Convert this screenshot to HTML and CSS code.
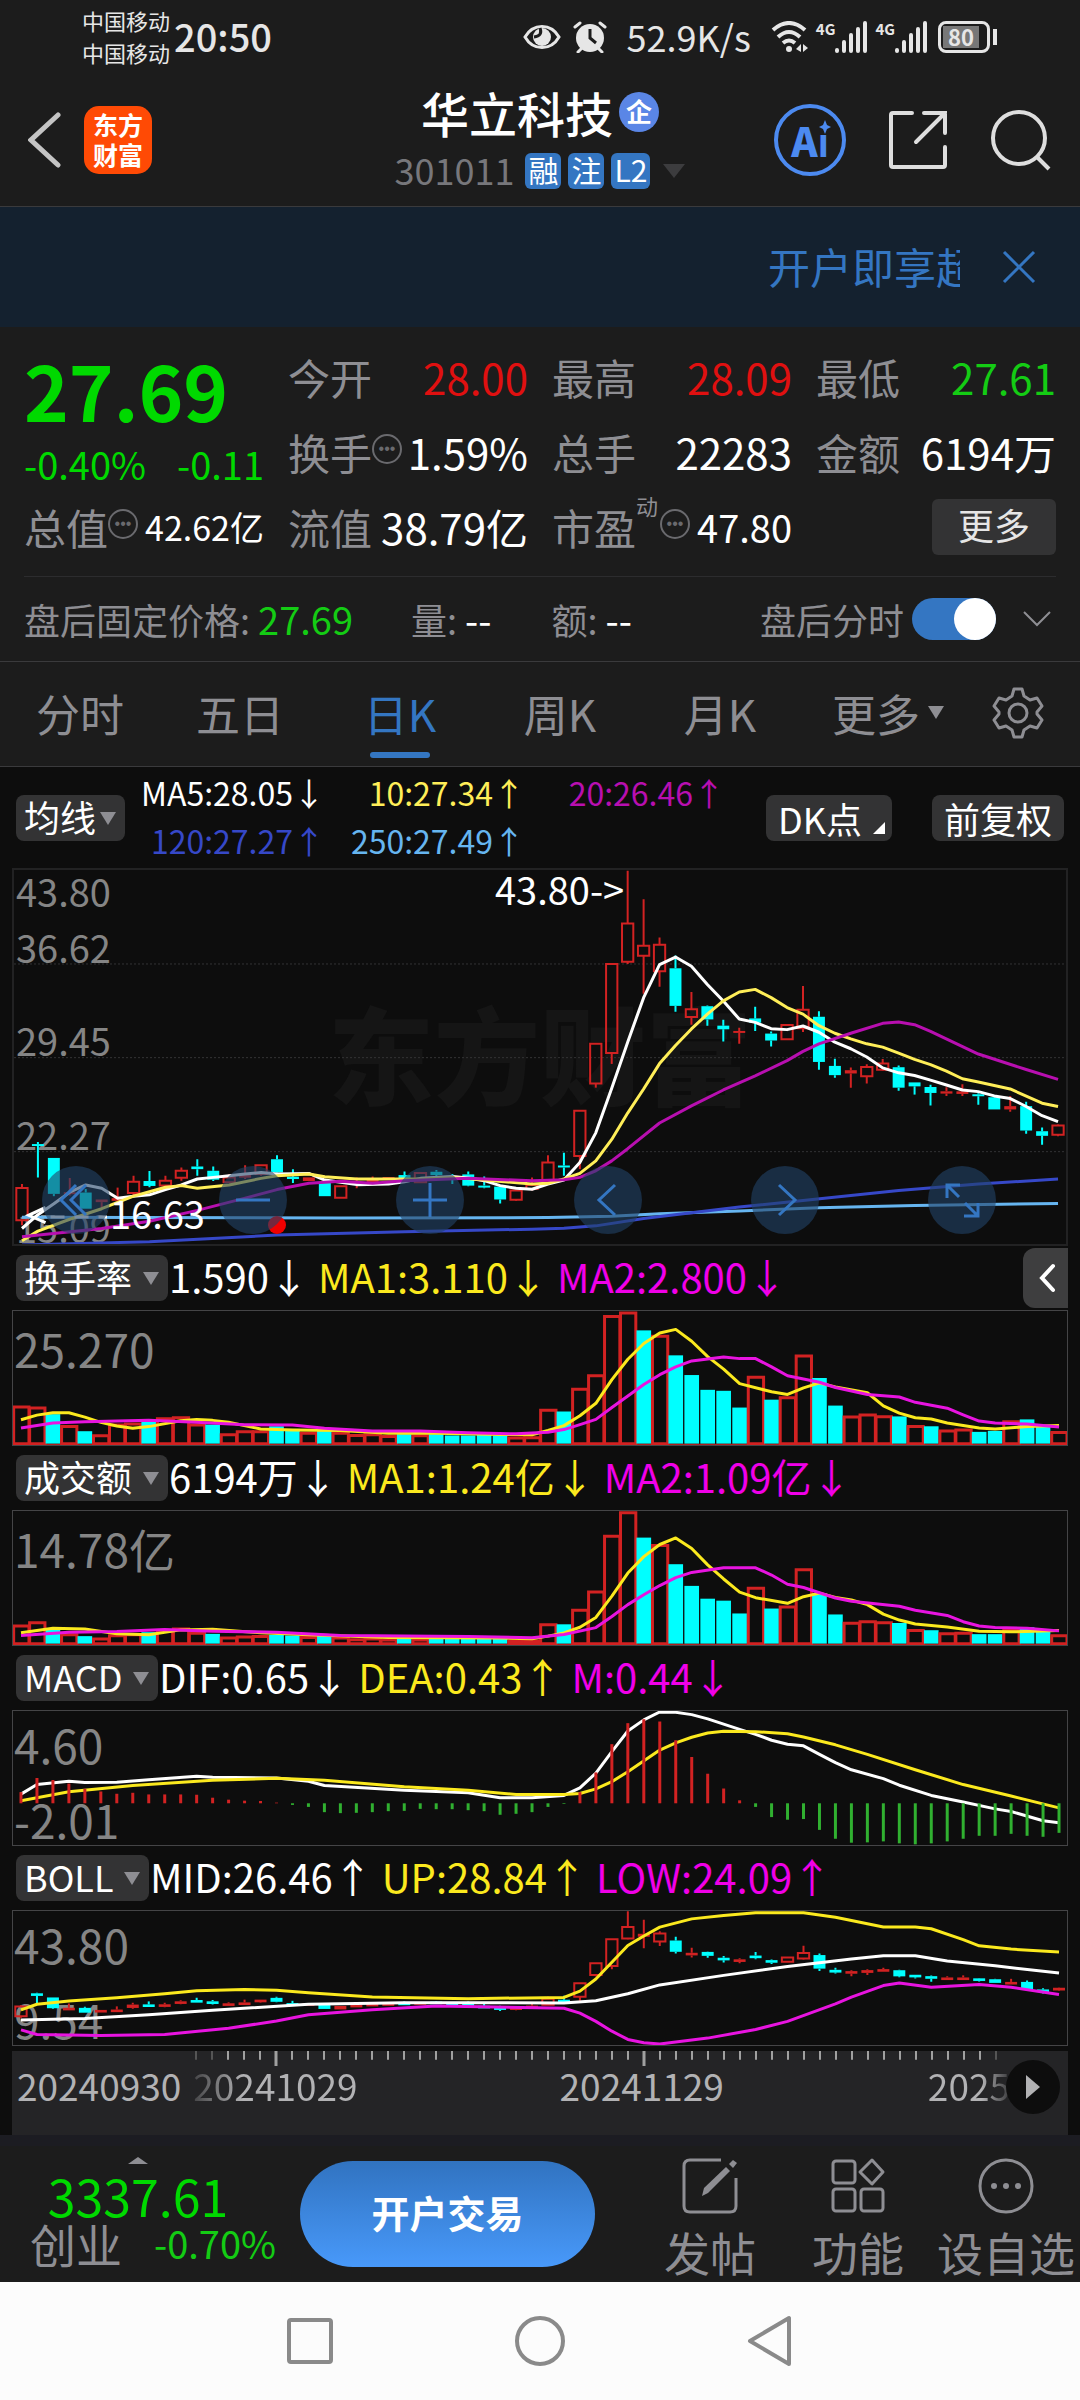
FILE: index.html
```html
<!DOCTYPE html>
<html lang="zh-CN">
<head>
    <meta charset="UTF-8">
    <meta name="viewport" content="width=device-width, initial-scale=1.0">
    <title>华立科技 301011</title>
    <link rel="stylesheet" href="styles.css">
</head>
<body>
    <div class="status-bar">
        <div class="carriers">
            <span>中国移动</span>
            <span>中国移动</span>
        </div>
        <span class="clock">20:50</span>
        <div class="status-icons">
            <svg class="eye" width="38" height="26" viewBox="0 0 38 26"><path d="M2 13C10-1 28-1 36 13C28 27 10 27 2 13Z" fill="none" stroke="#e6e6e6" stroke-width="3"/><circle cx="19" cy="13" r="9" fill="#e6e6e6"/><path d="M17 4Q20 12 11 13" fill="none" stroke="#1c1c1c" stroke-width="3"/></svg>
            <svg class="alarm" width="34" height="32" viewBox="0 0 34 32"><circle cx="17" cy="17" r="14" fill="#e6e6e6"/><path d="M2 6L7 2M32 6L27 2M8 28L5 31M26 28L29 31" stroke="#e6e6e6" stroke-width="3" stroke-linecap="round"/><path d="M17 8V17L23 22" fill="none" stroke="#1c1c1c" stroke-width="3"/></svg>
            <span class="speed">52.9K/s</span>
            <svg class="wifi" width="38" height="32" viewBox="0 0 38 32"><path d="M2 9Q18-5 34 9M7 16Q18 6 29 16M12 22Q18 17 24 22" fill="none" stroke="#e6e6e6" stroke-width="4"/><circle cx="18" cy="28" r="3" fill="#e6e6e6"/><path d="M30 23V31L25 28ZM32 31V23L37 27Z" fill="#e6e6e6"/></svg>
            <div class="signal"><small>4G</small><svg width="33" height="32" viewBox="0 0 33 32"><path d="M2 29V30M9 21V30M16 14V30M23 8V30M30 2V30" stroke="#e6e6e6" stroke-width="4" stroke-linecap="round"/></svg></div>
            <div class="signal"><small>4G</small><svg width="33" height="32" viewBox="0 0 33 32"><path d="M2 29V30M9 21V30M16 14V30M23 8V30M30 2V30" stroke="#e6e6e6" stroke-width="4" stroke-linecap="round"/></svg></div>
            <div class="battery"><span>80</span></div>
        </div>
    </div>

    <header class="top-bar">
        <div class="top-left">
            <button class="icon-btn" aria-label="返回"><svg width="34" height="56" viewBox="0 0 34 56"><path d="M30 3L3 28L30 53" fill="none" stroke="#c4c4c4" stroke-width="5" stroke-linecap="round"/></svg></button>
            <a href="#" class="logo">东方<br>财富</a>
        </div>
        <div class="stock">
            <h1>华立科技<span class="corp">企</span></h1>
            <p class="code"><span>301011</span><span class="tag">融</span><span class="tag">注</span><span class="tag">L2</span><i class="tri-down dark"></i></p>
        </div>
        <div class="top-right">
            <button class="ai" aria-label="AI">Aı<svg width="12" height="14" viewBox="0 0 12 14"><path d="M6 0L8 5L12 7L8 9L6 14L4 9L0 7L4 5Z" fill="#4c8af0"/></svg></button>
            <button class="icon-btn" aria-label="分享"><svg width="60" height="60" viewBox="0 0 60 60"><path d="M24 3H5Q3 3 3 5V55Q3 57 5 57H55Q57 57 57 55V37" fill="none" stroke="#dedede" stroke-width="4" stroke-linecap="round"/><path d="M36 3H57V23M57 3L28 32" fill="none" stroke="#dedede" stroke-width="4" stroke-linecap="round"/></svg></button>
            <button class="icon-btn" aria-label="搜索"><svg width="62" height="62" viewBox="0 0 62 62"><circle cx="29" cy="29" r="26" fill="none" stroke="#dedede" stroke-width="4"/><path d="M47 48L59 60" stroke="#dedede" stroke-width="4"/></svg></button>
        </div>
    </header>

    <div class="banner">
        <a href="#" class="marquee">开户即享超</a>
        <button class="icon-btn" aria-label="关闭"><svg width="34" height="34" viewBox="0 0 34 34"><path d="M2 2L32 32M32 2L2 32" stroke="#3476c2" stroke-width="3"/></svg></button>
    </div>

    <section class="quote">
        <div class="quote-grid">
            <div class="price">
                <strong>27.69</strong>
                <p><span>-0.40%</span><span>-0.11</span></p>
            </div>
            <div class="cell"><span>今开</span><b class="up">28.00</b></div>
            <div class="cell"><span>最高</span><b class="up">28.09</b></div>
            <div class="cell"><span>最低</span><b class="down">27.61</b></div>
            <div class="cell"><span>换手</span><i class="dots">•••</i><b>1.59%</b></div>
            <div class="cell"><span>总手</span><b>22283</b></div>
            <div class="cell"><span>金额</span><b>6194万</b></div>
            <div class="cell"><span>总值</span><i class="dots">•••</i><b class="small">42.62亿</b></div>
            <div class="cell"><span>流值</span><b>38.79亿</b></div>
            <div class="cell"><span>市盈<sup>动</sup></span><i class="dots pe">•••</i><b class="medium">47.80</b></div>
            <div class="cell end"><button class="more">更多</button></div>
        </div>
        <div class="after-hours">
            <span>盘后固定价格: <b class="down">27.69</b></span>
            <span class="vol">量: <b>--</b></span>
            <span class="amt">额: <b>--</b></span>
            <label class="switch-label" for="after">盘后分时</label>
            <input type="checkbox" class="switch" id="after" checked>
            <svg width="30" height="18" viewBox="0 0 30 18"><path d="M2 2L15 15L28 2" fill="none" stroke="#8e8e93" stroke-width="2"/></svg>
        </div>
    </section>

    <nav class="tabs">
        <button>分时</button>
        <button>五日</button>
        <button class="active">日K</button>
        <button>周K</button>
        <button>月K</button>
        <button>更多<i class="tri-down"></i></button>
        <button aria-label="设置"><svg width="52" height="52" viewBox="0 0 52 52"><path d="M22 2H30L32 9L38 13L45 11L50 19L45 25V27L50 33L45 41L38 39L32 43L30 50H22L20 43L14 39L7 41L2 33L7 27V25L2 19L7 11L14 13L20 9Z" fill="none" stroke="#8e8e93" stroke-width="3" stroke-linejoin="round"/><circle cx="26" cy="26" r="9" fill="none" stroke="#8e8e93" stroke-width="3"/></svg></button>
    </nav>

    <main class="charts">
        <div class="ma-row">
            <label class="pick tight"><select aria-label="均线"><option>均线</option></select></label>
            <div class="ma-values">
                <span class="white">MA5:28.05↓</span>
                <span class="ma10">10:27.34↑</span>
                <span class="ma20">20:26.46↑</span>
                <span class="ma120">120:27.27↑</span>
                <span class="ma250">250:27.49↑</span>
            </div>
            <button class="chip dk">DK点</button>
            <button class="chip">前复权</button>
        </div>

        <div class="frame main-frame">
            <span class="watermark">东方财富</span>
            <div class="price-scale">
                <span class="top">43.80</span><span>36.62</span><span>29.45</span><span>22.27</span><span>15.09</span>
            </div>
            <svg id="kline" viewBox="0 53 3168 1134" preserveAspectRatio="none"></svg>
            <span class="mark high">43.80-&gt;</span>
            <span class="mark low">16.63</span>
            <span class="event"></span>
            <div class="tools">
                <button aria-label="最早"><svg viewBox="0 0 68 68"><path d="M34 19L19 34L34 49M44 19L29 34L44 49"/></svg></button>
                <button aria-label="缩小"><svg viewBox="0 0 68 68"><path d="M17 34H51"/></svg></button>
                <button aria-label="放大"><svg viewBox="0 0 68 68"><path d="M17 34H51M34 17V51"/></svg></button>
                <button aria-label="左移"><svg viewBox="0 0 68 68"><path d="M41 19L25 34L41 49"/></svg></button>
                <button aria-label="右移"><svg viewBox="0 0 68 68"><path d="M28 19L44 34L28 49"/></svg></button>
                <button aria-label="全屏"><svg viewBox="0 0 68 68"><path d="M19 32V19H32M19 19L31 31M50 37V50H36M50 50L37 37"/></svg></button>
            </div>
        </div>

        <div class="indicator-head">
            <label class="pick"><select aria-label="指标一"><option>换手率</option></select></label>
            <span class="white">1.590↓</span><span class="yellow">MA1:3.110↓</span><span class="magenta">MA2:2.800↓</span>
            <button class="collapse" aria-label="展开"><svg width="18" height="30" viewBox="0 0 18 30"><path d="M15 3L4 15L15 27" fill="none" stroke="#fff" stroke-width="4" stroke-linecap="round"/></svg></button>
        </div>
        <div class="frame">
            <div class="scale"><span>25.270</span></div>
            <svg id="turnover" viewBox="0 181 3168 408" preserveAspectRatio="none"></svg>
        </div>

        <div class="indicator-head">
            <label class="pick"><select aria-label="指标二"><option>成交额</option></select></label>
            <span class="white">6194万↓</span><span class="yellow">MA1:1.24亿↓</span><span class="magenta">MA2:1.09亿↓</span>
        </div>
        <div class="frame">
            <div class="scale"><span>14.78亿</span></div>
            <svg id="amount" viewBox="0 781 3168 408" preserveAspectRatio="none"></svg>
        </div>

        <div class="indicator-head">
            <label class="pick"><select aria-label="指标三"><option>MACD</option></select></label>
            <span class="white">DIF:0.65↓</span><span class="yellow">DEA:0.43↑</span><span class="magenta">M:0.44↓</span>
        </div>
        <div class="frame">
            <div class="scale"><span>4.60</span><span>-2.01</span></div>
            <svg id="macd" viewBox="0 151 3168 408" preserveAspectRatio="none"></svg>
        </div>

        <div class="indicator-head">
            <label class="pick"><select aria-label="指标四"><option>BOLL</option></select></label>
            <span class="white">MID:26.46↑</span><span class="yellow">UP:28.84↑</span><span class="magenta">LOW:24.09↑</span>
        </div>
        <div class="frame">
            <div class="scale"><span>43.80</span><span>9.54</span></div>
            <svg id="boll" viewBox="0 751 3168 408" preserveAspectRatio="none"></svg>
        </div>

        <div class="timeline">
            <svg id="ticks" viewBox="0 0 3168 48" preserveAspectRatio="none"></svg>
            <div class="dates">
                <span>20240930</span>
                <span class="fade-in">20241029</span>
                <span class="mid">20241129</span>
                <span class="fade-out">2025</span>
            </div>
            <button class="play" aria-label="播放"></button>
        </div>
    </main>

    <footer class="bottom-bar">
        <div class="index">
            <i class="tri-up"></i>
            <strong>3337.61</strong>
            <p><span>创业</span><b>-0.70%</b></p>
        </div>
        <button class="trade">开户交易</button>
        <div class="actions">
            <a href="#"><svg width="58" height="58" viewBox="0 0 58 58"><path d="M40 3H9Q3 3 3 9V49Q3 55 9 55H49Q55 55 55 49V21" fill="none" stroke="#8e8e93" stroke-width="3"/><path d="M21 39L23 31L45 10L49 14L27 36Z" fill="#8e8e93"/><path d="M48 7L52 3L56 6L52 11Z" fill="#8e8e93"/></svg>发帖</a>
            <a href="#"><svg width="58" height="58" viewBox="0 0 58 58"><g fill="none" stroke="#8e8e93" stroke-width="3"><rect x="4" y="4" width="22" height="22" rx="3"/><rect x="4" y="32" width="22" height="22" rx="3"/><rect x="32" y="32" width="22" height="22" rx="3"/><path d="M43 3L54 15L43 27L31 15Z" stroke-linejoin="round"/></g></svg>功能</a>
            <a href="#"><svg width="58" height="58" viewBox="0 0 58 58"><circle cx="29" cy="29" r="26" fill="none" stroke="#8e8e93" stroke-width="3"/><g fill="#8e8e93"><circle cx="17" cy="29" r="3"/><circle cx="29" cy="29" r="3"/><circle cx="41" cy="29" r="3"/></g></svg>设自选</a>
        </div>
    </footer>

    <div class="system-nav">
        <button aria-label="多任务"><svg width="48" height="52" viewBox="0 0 48 52"><rect x="3" y="5" width="42" height="42" rx="2"/></svg></button>
        <button aria-label="主页"><svg width="52" height="52" viewBox="0 0 52 52"><circle cx="26" cy="26" r="23"/></svg></button>
        <button aria-label="后退"><svg width="48" height="52" viewBox="0 0 48 52"><path d="M43 3V49L4 26Z" stroke-linejoin="round"/></svg></button>
    </div>

    <script src="charts.js"></script>
</body>
</html>
```

FILE: styles.css
```css
* {
    box-sizing: border-box;
}

body {
    margin: 0;
    background: #1c1c1c;
    color: #fff;
    font-family: "Noto Sans CJK SC", sans-serif;
    font-size: 36px;
    line-height: 1;
}

button, select {
    font: inherit;
    color: inherit;
    background: none;
    border: none;
    padding: 0;
    cursor: pointer;
}

h1, p {
    margin: 0;
}

b, i, small {
    font-weight: normal;
    font-style: normal;
}

a {
    color: inherit;
    text-decoration: none;
}

svg {
    display: block;
    flex: none;
}

.up { color: #e01010; }
.down { color: #14cc14; }
.white { color: #fff; }
.yellow { color: #fbe91e; }
.magenta { color: #f000e8; }

.tri-down, .tri-up {
    display: inline-block;
    border: 8px solid transparent;
    border-top: 13px solid #8e8e93;
    border-bottom: 0;
}

.tri-down.dark {
    border-width: 14px 11px 0;
    border-top-color: #3c3c3e;
    margin-left: 6px;
}

.tri-up {
    border-width: 0 10px 7px;
    border-bottom: 7px solid #8e8e93;
}

/* phone status bar */
.status-bar {
    display: flex;
    align-items: center;
    height: 74px;
    padding: 0 82px;
    color: #e6e6e6;
}

.carriers {
    display: grid;
    gap: 10px;
    padding-bottom: 2px;
    font-size: 22px;
}

.clock {
    margin-left: 4px;
    padding-bottom: 2px;
    font-size: 38px;
    font-weight: 500;
}

.status-icons {
    display: flex;
    align-items: center;
    margin-left: auto;
}

.alarm { margin-left: 12px; }
.speed { margin: 0 20px; padding-bottom: 3px; }

.signal {
    display: flex;
    align-items: flex-start;
    margin-left: 7px;
}

.signal small {
    font-size: 15px;
    font-weight: 700;
}

.battery {
    position: relative;
    width: 52px;
    height: 32px;
    margin-left: 10px;
    margin-right: 8px;
    border: 3px solid #e6e6e6;
    border-radius: 8px;
    padding: 2px;
}

.battery span {
    display: block;
    width: 36px;
    height: 22px;
    line-height: 20px;
    background: #777;
    font-size: 22px;
    font-weight: 700;
    text-align: center;
}

.battery::after {
    content: "";
    position: absolute;
    right: -10px;
    top: 5px;
    width: 4px;
    height: 16px;
    background: #e6e6e6;
}

/* title bar */
.top-bar {
    display: grid;
    grid-template-columns: 1fr auto 1fr;
    align-items: center;
    height: 133px;
    padding: 0 28px;
    border-bottom: 1px solid #3a3a3c;
}

.top-left {
    display: flex;
    align-items: center;
    gap: 22px;
}

.logo {
    padding: 3px 9px 5px;
    border-radius: 15px;
    background: #ff4a05;
    font-size: 25px;
    font-weight: 700;
    line-height: 30px;
}

.stock h1 {
    display: flex;
    align-items: center;
    justify-content: center;
    gap: 6px;
    font-size: 48px;
    font-weight: 500;
    line-height: 44px;
}

.corp {
    width: 40px;
    height: 40px;
    line-height: 37px;
    border-radius: 50%;
    background: #5a86e6;
    font-size: 26px;
    font-weight: 700;
    text-align: center;
}

.code {
    display: flex;
    align-items: center;
    justify-content: center;
    gap: 7px;
    margin-top: 17px;
    color: #77777b;
}

.code span:first-child {
    padding-bottom: 3px;
    margin-right: 4px;
}

.tag {
    height: 36px;
    padding: 0 3px;
    border-radius: 6px;
    background: #3476c2;
    color: #fff;
    font-size: 30px;
    line-height: 33px;
}

.top-right {
    display: flex;
    align-items: center;
    justify-content: flex-end;
    gap: 42px;
}

.ai {
    position: relative;
    width: 72px;
    height: 72px;
    border: 4px solid #4c8af0;
    border-radius: 50%;
    color: #4c8af0;
    font-size: 40px;
    font-weight: 900;
    line-height: 58px;
}

.ai svg {
    position: absolute;
    right: 11px;
    top: 12px;
}

/* promo */
.banner {
    display: flex;
    align-items: center;
    justify-content: flex-end;
    gap: 42px;
    height: 120px;
    padding-right: 44px;
    background: #14212f;
    color: #3476c2;
}

.marquee {
    width: 192px;
    overflow: hidden;
    padding-bottom: 2px;
    font-size: 42px;
    line-height: 50px;
    white-space: nowrap;
}

/* quote */
.quote {
    padding: 12px 24px 0;
}

.quote-grid {
    display: grid;
    grid-template-columns: repeat(4, 1fr);
    grid-auto-rows: 75px;
    column-gap: 24px;
    padding-bottom: 12px;
    border-bottom: 1px solid #2c2c2e;
    box-sizing: content-box;
}

.price {
    grid-row: span 2;
    color: #00d900;
}

.price strong {
    display: block;
    font-size: 76px;
    line-height: 100px;
}

.price p {
    display: flex;
    justify-content: space-between;
    font-size: 38px;
    line-height: 50px;
}

.cell {
    display: flex;
    align-items: center;
    font-size: 42px;
    white-space: nowrap;
    color: #8e8e93;
}

.cell b {
    margin-left: auto;
    color: #fff;
}

.cell b.up { color: #e01010; }
.cell b.down { color: #14cc14; }
.cell b.small { font-size: 34px; }
.cell b.medium { font-size: 38px; }

.cell.end {
    justify-content: flex-end;
}

.cell > span {
    position: relative;
}

.cell sup {
    position: absolute;
    left: 84px;
    top: -12px;
    font-size: 22px;
}

.dots {
    width: 30px;
    height: 30px;
    margin-bottom: 6px;
    border: 2px solid #6a6a6e;
    border-radius: 50%;
    color: #6a6a6e;
    font-family: "Liberation Sans", sans-serif;
    font-size: 16px;
    line-height: 26px;
    text-align: center;
}

.dots.pe {
    margin-left: 24px;
}

.more {
    width: 124px;
    height: 56px;
    padding-bottom: 6px;
    border-radius: 6px;
    background: #333334;
    color: #e6e6e6;
    font-size: 36px;
}

.after-hours {
    display: flex;
    align-items: center;
    height: 84px;
    padding-right: 4px;
    color: #8e8e93;
}

.after-hours b { font-size: 38px; }
.vol { margin-left: 58px; }
.amt { margin-left: 60px; }
.vol b, .amt b { color: #fff; }
.switch-label { margin-left: auto; }

.switch {
    appearance: none;
    position: relative;
    width: 84px;
    height: 42px;
    margin: 0 26px 0 8px;
    border-radius: 21px;
    background: #3476c2;
}

.switch::after {
    content: "";
    position: absolute;
    right: 0;
    width: 42px;
    height: 42px;
    border-radius: 50%;
    background: #fff;
}

/* period tabs */
.tabs {
    display: grid;
    grid-template-columns: repeat(5, 160fr) 176fr 84fr;
    height: 106px;
    padding-right: 20px;
    border-top: 1px solid #3a3a3c;
    border-bottom: 1px solid #3a3a3c;
    color: #8e8e93;
    font-size: 44px;
}

.tabs button {
    display: flex;
    align-items: center;
    justify-content: center;
    gap: 8px;
    position: relative;
    padding-bottom: 3px;
}

.tabs .active {
    color: #3476c2;
}

.tabs .active::after {
    content: "";
    position: absolute;
    bottom: 8px;
    width: 60px;
    height: 6px;
    border-radius: 3px;
    background: #3476c2;
}

/* charts */
.charts {
    padding: 0 12px;
    background: #0d0d0d;
}

.ma-row {
    display: flex;
    align-items: center;
    height: 101px;
    padding: 0 4px;
}

.ma-values {
    flex: 1;
    display: grid;
    grid-template-columns: repeat(3, 200px);
    row-gap: 16px;
    padding-bottom: 4px;
    font-size: 32px;
    text-align: right;
}

.ma10 { color: #ffee58; }
.ma20 { color: #b80fb0; }
.ma120 { color: #3648c8; }
.ma250 { color: #66b5f0; }

.pick {
    position: relative;
    border-radius: 8px;
    background: #333334;
}

.pick select {
    appearance: none;
    display: block;
    height: 46px;
    padding: 0 35px 4px 8px;
    line-height: 42px;
}

.pick.tight select {
    padding-right: 28px;
}

.pick::after {
    content: "";
    position: absolute;
    right: 9px;
    top: 17px;
    border: 8px solid transparent;
    border-top: 13px solid #8e8e93;
    border-bottom: 0;
    pointer-events: none;
}

.chip {
    position: relative;
    height: 46px;
    padding: 0 12px;
    margin-left: 40px;
    border-radius: 8px;
    background: #333334;
    line-height: 40px;
}

.chip.dk {
    padding-right: 30px;
}

.chip.dk::after {
    content: "";
    position: absolute;
    right: 7px;
    bottom: 7px;
    border-left: 12px solid transparent;
    border-bottom: 12px solid #fff;
}

.frame {
    position: relative;
    height: 136px;
    border: 1px solid #444446;
}

.frame > svg {
    position: relative;
    width: 100%;
    height: 100%;
}

.frame path, .frame rect, .timeline path {
    vector-effect: non-scaling-stroke;
}

.main-frame {
    height: 378px;
    border: 2px solid #222223;
}

.scale {
    position: absolute;
    left: 1px;
    top: 0;
    bottom: 0;
    padding: 10px 0 3px;
    display: flex;
    flex-direction: column;
    justify-content: space-between;
    font-size: 46px;
    color: #858585;
}

.scale span:only-child {
    line-height: 54px;
}

/* every label sits on its own grid line */
.price-scale {
    position: absolute;
    left: 2px;
    top: 0;
    bottom: 0;
    display: grid;
    grid-template-columns: 100px;
    grid-template-rows: repeat(4, 1fr);
    align-items: end;
    color: #858585;
    font-size: 38px;
    line-height: 34px;
}

.price-scale span {
    grid-column: 1;
}

.price-scale .top {
    grid-row: 1;
    align-self: start;
    padding-top: 4px;
}

.price-scale .top + span {
    grid-row: 1;
}

.watermark {
    position: absolute;
    left: 0;
    right: 0;
    top: 128px;
    color: #151515;
    font-size: 106px;
    font-weight: 900;
    text-align: center;
}

.mark {
    position: absolute;
    font-size: 38px;
}

.mark.high {
    right: 42%;
    top: 0;
}

.mark.low {
    left: 96px;
    bottom: 12px;
}

.event {
    position: absolute;
    left: 25%;
    bottom: 10px;
    width: 18px;
    height: 18px;
    margin-left: -9px;
    border-radius: 50%;
    background: #f00000;
}

.tools {
    position: absolute;
    left: 28px;
    right: 70px;
    bottom: 10px;
    display: flex;
    justify-content: space-between;
}

.tools button {
    width: 68px;
    height: 68px;
    border-radius: 50%;
    background: rgba(34, 66, 104, 0.6);
}

.tools path {
    fill: none;
    stroke: #3476c2;
    stroke-width: 3;
}

.indicator-head {
    position: relative;
    display: flex;
    align-items: center;
    height: 64px;
    padding-left: 4px;
    font-size: 40px;
    white-space: nowrap;
}

.indicator-head span {
    margin-right: 9px;
    padding-bottom: 4px;
}

.indicator-head .pick {
    margin-right: 1px;
    font-size: 36px;
}

.collapse {
    position: absolute;
    right: 0;
    top: 2px;
    width: 45px;
    height: 60px;
    padding-left: 15px;
    border-radius: 12px 0 0 12px;
    background: #3e3e3f;
}

/* date slider */
.timeline {
    position: relative;
    height: 89px;
    border-top: 5px solid #0d0d0d;
    background: #242426;
}

.timeline > svg {
    width: 100%;
    height: 16px;
}

.dates {
    display: flex;
    padding-left: 5px;
    color: #b2b2b4;
    font-size: 37px;
    line-height: 36px;
}

.fade-in, .fade-out {
    margin-left: 12px;
    background: linear-gradient(90deg, #444446, #b2b2b4 30%);
    background-clip: text;
    color: transparent;
}

.dates .mid {
    margin-left: 202px;
}

.fade-out {
    margin-left: auto;
    margin-right: 58px;
    background-image: linear-gradient(90deg, #b2b2b4 65%, #3a3a3c);
}

.play {
    position: absolute;
    right: 8px;
    top: 9px;
    width: 54px;
    height: 54px;
    border-radius: 50%;
    background: #0d0d0d;
}

.play::after {
    content: "";
    display: block;
    margin-left: 20px;
    width: 0;
    border: 12px solid transparent;
    border-left: 14px solid #b2b2b4;
    border-right: 0;
}

/* bottom bar */
.bottom-bar {
    display: flex;
    height: 147px;
    padding-top: 11px;
    border-top: 11px solid #1c1c22;
    color: #8e8e93;
}

.index {
    width: 276px;
    margin-right: 24px;
    display: flex;
    flex-direction: column;
    align-items: center;
}

.index strong {
    margin-top: 6px;
    font-size: 50px;
    font-weight: normal;
    color: #00d900;
}

.index p {
    align-self: stretch;
    display: flex;
    align-items: center;
    justify-content: space-between;
    padding-left: 30px;
    font-size: 46px;
}

.index b {
    font-size: 38px;
    color: #14cc14;
}

.trade {
    width: 295px;
    height: 106px;
    margin-top: 4px;
    padding-bottom: 4px;
    border-radius: 53px;
    background: linear-gradient(#3173c0, #4899fa);
    color: #fff;
    font-size: 38px;
    font-weight: 700;
}

.actions {
    flex: 1;
    display: grid;
    grid-template-columns: repeat(3, 148px);
    justify-content: end;
    font-size: 46px;
    white-space: nowrap;
}

.actions a {
    display: flex;
    flex-direction: column;
    align-items: center;
    justify-content: space-between;
    padding-bottom: 8px;
}

.system-nav {
    display: flex;
    justify-content: center;
    gap: 180px;
    padding: 33px 0;
    background: #fcfcfc;
}

.system-nav svg {
    fill: none;
    stroke: #8a8a8a;
    stroke-width: 4;
}
```

FILE: charts.js
```js
const SLOT = 48;
const RED = '#d22222';
const CYAN = '#00ffff';
const YELLOW = '#fbe91e';
const MAGENTA = '#e814e0';

// one row per day: direction, body top, body bottom, high, low
const candles = [
    ['r', 1017, 1115, 1005, 1130], ['c', 884, 890, 878, 985], ['c', 926, 1035, 926, 1042],
    ['r', 1030, 1036, 987, 1040], ['c', 1031, 1080, 1020, 1080], ['r', 1052, 1060, 1052, 1078],
    ['r', 1048, 1056, 1016, 1056], ['r', 998, 1032, 980, 1040], ['c', 996, 1011, 966, 1015],
    ['r', 995, 1010, 980, 1025], ['r', 965, 986, 955, 995], ['c', 952, 960, 930, 980],
    ['c', 965, 992, 952, 996], ['r', 985, 1000, 975, 1000], ['r', 976, 986, 948, 990],
    ['r', 948, 975, 948, 980], ['c', 930, 970, 918, 975], ['c', 983, 990, 960, 1002],
    ['r', 985, 996, 985, 996], ['c', 1002, 1042, 1002, 1042], ['r', 1012, 1047, 1012, 1047],
    ['r', 1000, 1003, 985, 1018], ['r', 990, 1000, 982, 1005], ['r', 984, 990, 984, 990],
    ['c', 978, 988, 967, 992], ['r', 972, 1000, 972, 1000], ['c', 968, 978, 963, 982],
    ['c', 985, 992, 975, 1005], ['c', 976, 1010, 967, 1012], ['c', 1010, 1015, 982, 1018],
    ['c', 1013, 1052, 1010, 1064], ['r', 1025, 1053, 1025, 1056], ['r', 1008, 1020, 985, 1025],
    ['r', 940, 1000, 918, 1000], ['c', 949, 954, 910, 980], ['r', 783, 920, 783, 960],
    ['r', 580, 700, 580, 713], ['r', 338, 608, 338, 641], ['r', 215, 331, 55, 338],
    ['r', 283, 313, 142, 428], ['r', 280, 360, 258, 407], ['c', 351, 465, 312, 483],
    ['r', 475, 499, 423, 522], ['c', 466, 506, 464, 525], ['c', 525, 536, 507, 573],
    ['r', 541, 547, 531, 580], ['c', 503, 516, 468, 541], ['c', 549, 570, 543, 588],
    ['r', 523, 566, 523, 566], ['r', 477, 533, 405, 544], ['c', 498, 635, 481, 659],
    ['c', 647, 675, 625, 683], ['r', 660, 670, 652, 713], ['r', 650, 678, 642, 700],
    ['r', 640, 659, 626, 661], ['c', 651, 713, 646, 722], ['c', 697, 709, 697, 734],
    ['c', 711, 729, 704, 767], ['r', 724, 731, 712, 738], ['r', 724, 732, 703, 738],
    ['c', 733, 738, 730, 765], ['c', 742, 779, 738, 779], ['r', 769, 779, 738, 786],
    ['c', 769, 843, 756, 853], ['c', 845, 859, 834, 886], ['r', 828, 856, 825, 860]
];

// days whose volume bar is filled
const filled = [2, 4, 8, 12, 16, 17, 19, 24, 26, 27, 28, 29, 30, 34, 39, 41, 42, 43, 44, 45, 47, 50, 51, 55, 57, 60, 61, 63, 64];

const turnover = [470, 473, 495, 530, 547, 558, 525, 522, 515, 506, 503, 525, 527, 555, 546, 546, 532, 540, 550, 545, 550, 557, 555, 560, 556, 558, 556, 560, 560, 558, 560, 565, 564, 480, 487, 416, 375, 195, 184, 240, 255, 316, 376, 421, 424, 475, 380, 451, 442, 315, 385, 469, 501, 495, 500, 502, 530, 532, 543, 540, 549, 546, 515, 511, 530, 548];
const amount = [1128, 1118, 1140, 1155, 1162, 1168, 1158, 1155, 1150, 1145, 1137, 1150, 1155, 1165, 1162, 1160, 1158, 1160, 1163, 1160, 1165, 1170, 1168, 1171, 1168, 1171, 1169, 1170, 1170, 1169, 1170, 1175, 1174, 1124, 1126, 1080, 1025, 855, 783, 862, 883, 943, 1009, 1048, 1054, 1093, 1013, 1078, 1070, 957, 1032, 1096, 1120, 1115, 1118, 1122, 1142, 1144, 1152, 1150, 1156, 1156, 1142, 1135, 1146, 1158];
const macd = [398, 355, 361, 372, 388, 396, 403, 400, 405, 405, 405, 406, 415, 421, 424, 425, 430, 437, 443, 459, 462, 461, 459, 456, 455, 449, 450, 450, 453, 456, 467, 464, 459, 443, 434, 398, 338, 252, 188, 176, 183, 240, 291, 342, 387, 423, 443, 474, 482, 480, 513, 540, 552, 551, 548, 554, 557, 554, 548, 540, 531, 531, 525, 531, 534, 522];

// lines are [day, y] pairs written flat
const ma5 = [0, 1140, 1, 1098, 2, 1065, 3, 1030, 4, 1008, 5, 1018, 6, 1048, 7, 1042, 8, 1038, 9, 1022, 10, 1008, 11, 990, 12, 985, 13, 980, 14, 975, 15, 970, 16, 975, 18, 973, 19, 993, 20, 1000, 21, 1007, 23, 1005, 24, 998, 25, 988, 27, 982, 28, 987, 29, 995, 30, 1010, 31, 1018, 32, 1021, 33, 1005, 34, 993, 35, 940, 36, 850, 37, 715, 38, 575, 39, 440, 40, 340, 41, 317, 42, 345, 43, 400, 44, 450, 45, 505, 46, 515, 47, 534, 48, 537, 49, 526, 50, 545, 51, 575, 52, 595, 53, 620, 54, 653, 55, 668, 56, 676, 57, 690, 58, 705, 59, 720, 60, 725, 61, 738, 62, 746, 63, 770, 64, 798, 65, 816];
const ma10 = [0, 1177, 1, 1148, 3, 1112, 5, 1080, 7, 1042, 9, 1015, 10, 1010, 11, 1018, 13, 1008, 15, 988, 16, 980, 18, 975, 19, 983, 21, 990, 25, 990, 27, 985, 29, 993, 32, 1005, 33, 1003, 34, 990, 35, 973, 36, 935, 37, 870, 38, 790, 39, 717, 40, 640, 41, 585, 42, 535, 43, 490, 44, 450, 45, 423, 46, 415, 47, 440, 48, 470, 49, 490, 50, 525, 51, 548, 52, 565, 53, 580, 54, 590, 55, 608, 56, 627, 57, 643, 58, 663, 59, 686, 60, 696, 62, 717, 64, 760, 65, 770];
const ma20 = [0, 1165, 5, 1140, 8, 1118, 11, 1085, 14, 1048, 16, 1022, 18, 1003, 20, 997, 22, 1003, 24, 995, 28, 988, 32, 995, 34, 992, 35, 985, 36, 965, 37, 935, 38, 898, 40, 820, 42, 768, 44, 720, 46, 677, 48, 631, 49, 603, 50, 580, 52, 548, 54, 518, 55, 514, 56, 522, 57, 542, 60, 611, 63, 658, 65, 688];
const ma120 = [0, 1190, 8, 1180, 16, 1160, 24, 1150, 32, 1142, 34, 1139, 36, 1132, 39, 1110, 42, 1092, 45, 1075, 49, 1055, 55, 1025, 60, 1005, 65, 990];
const ma250 = [0, 1106, 20, 1108, 33, 1107, 37, 1103, 40, 1095, 45, 1087, 50, 1077, 56, 1070, 65, 1064];

const turnMa1 = [0, 512, 1, 498, 2, 491, 3, 491, 4, 504, 5, 520, 6, 531, 7, 538, 8, 533, 10, 515, 11, 511, 12, 514, 13, 520, 15, 540, 17, 543, 20, 545, 23, 553, 26, 553, 30, 557, 32, 558, 33, 545, 34, 530, 35, 500, 36, 462, 37, 390, 38, 328, 39, 280, 40, 248, 41, 237, 42, 273, 43, 320, 44, 358, 45, 402, 47, 427, 48, 435, 49, 415, 50, 400, 51, 412, 53, 430, 54, 470, 55, 492, 56, 506, 57, 510, 58, 522, 60, 537, 61, 540, 63, 533, 65, 530];
const turnMa2 = [0, 537, 2, 522, 4, 518, 8, 514, 11, 520, 14, 527, 17, 528, 19, 538, 22, 546, 25, 546, 28, 552, 31, 555, 33, 550, 34, 542, 35, 527, 36, 511, 37, 475, 38, 440, 39, 405, 40, 375, 41, 351, 42, 333, 44, 321, 45, 326, 46, 326, 47, 351, 48, 378, 50, 398, 51, 414, 53, 435, 55, 443, 56, 459, 58, 477, 59, 497, 60, 516, 61, 522, 63, 525, 65, 534];
const amtMa1 = [0, 1152, 2, 1138, 4, 1140, 6, 1155, 8, 1158, 10, 1143, 12, 1141, 15, 1152, 18, 1158, 23, 1166, 30, 1168, 32, 1170, 33, 1162, 34, 1152, 35, 1135, 36, 1105, 37, 1040, 38, 970, 39, 920, 40, 883, 41, 863, 42, 895, 43, 945, 44, 988, 45, 1028, 46, 1045, 48, 1062, 49, 1042, 50, 1031, 51, 1044, 52, 1052, 53, 1066, 54, 1095, 55, 1113, 56, 1125, 58, 1134, 60, 1147, 62, 1149, 65, 1145];
const amtMa2 = [0, 1160, 3, 1150, 6, 1148, 9, 1142, 12, 1147, 16, 1150, 20, 1160, 28, 1163, 32, 1167, 34, 1157, 36, 1136, 37, 1102, 38, 1066, 39, 1036, 40, 1008, 41, 984, 42, 968, 44, 954, 46, 954, 47, 976, 48, 1004, 49, 1014, 51, 1046, 52, 1056, 55, 1071, 56, 1083, 58, 1099, 59, 1118, 60, 1131, 61, 1136, 63, 1138, 65, 1146];
const dif = [0, 404, 1, 375, 3, 365, 4, 369, 6, 368, 8, 360, 11, 350, 12, 353, 16, 355, 18, 365, 19, 378, 24, 392, 28, 400, 30, 415, 32, 415, 34, 408, 35, 385, 36, 340, 37, 275, 38, 212, 39, 178, 40, 154, 41, 155, 42, 162, 43, 175, 45, 207, 46, 222, 47, 240, 48, 252, 49, 257, 50, 283, 51, 308, 52, 330, 54, 357, 55, 377, 57, 408, 59, 428, 61, 449, 62, 457, 64, 485, 65, 491];
const dea = [0, 424, 3, 397, 7, 378, 12, 362, 16, 356, 19, 362, 24, 382, 28, 392, 31, 405, 34, 405, 35, 402, 36, 388, 37, 366, 38, 336, 40, 270, 41, 248, 42, 231, 43, 218, 44, 213, 46, 214, 48, 220, 49, 230, 51, 254, 53, 283, 56, 330, 59, 375, 62, 410, 65, 446];
const bollUp = [0, 1052, 1, 1035, 3, 1025, 6, 1015, 9, 1003, 11, 994, 14, 990, 16, 992, 18, 1000, 22, 1013, 28, 1018, 34, 1014, 35, 995, 36, 958, 37, 907, 38, 856, 39, 827, 40, 800, 42, 775, 44, 765, 46, 756, 49, 756, 51, 770, 54, 800, 56, 800, 57, 805, 59, 838, 60, 857, 62, 867, 65, 876];
const bollMid = [0, 1083, 4, 1078, 8, 1067, 12, 1053, 18, 1035, 24, 1030, 34, 1031, 36, 1024, 38, 1003, 40, 976, 44, 947, 48, 920, 52, 897, 54, 887, 56, 887, 58, 903, 61, 918, 65, 940];
const bollLow = [0, 1113, 1, 1127, 5, 1130, 9, 1127, 13, 1108, 16, 1086, 18, 1067, 22, 1052, 26, 1040, 34, 1047, 35, 1062, 36, 1087, 37, 1117, 38, 1142, 39, 1152, 40, 1156, 43, 1138, 46, 1112, 48, 1087, 51, 1034, 52, 1013, 54, 978, 55, 970, 57, 983, 60, 975, 62, 983, 65, 1005];

function center(i) {
    return i * SLOT + SLOT / 2;
}

function line(points, color) {
    let d = '';
    for (let i = 0; i < points.length; i += 2) {
        d += `${i ? 'L' : 'M'}${center(points[i])} ${points[i + 1]}`;
    }
    return `<path d="${d}" fill="none" stroke="${color}" stroke-width="3" stroke-linejoin="round"/>`;
}

function drawCandles(convert, minBody) {
    return candles.map(([dir, top, bottom, high, low], i) => {
        const x = center(i);
        const t = convert(top);
        const h = Math.max(convert(bottom) - t, minBody);
        const color = dir === 'r' ? RED : CYAN;
        const wick = `<path d="M${x} ${convert(high)}V${t}M${x} ${Math.max(t + h, convert(low))}V${t + h}" stroke="${color}" stroke-width="2"/>`;
        const hollow = dir === 'r' && h > 11;
        const body = hollow
            ? `<rect x="${x - 17}" y="${t}" width="34" height="${h}" fill="none" stroke="${RED}" stroke-width="2"/>`
            : `<rect x="${x - 18}" y="${t}" width="36" height="${h}" fill="${color}"/>`;
        return wick + body;
    }).join('');
}

function drawBars(tops, base) {
    return tops.map((top, i) => {
        const x = i * SLOT;
        if (filled.includes(i)) {
            return `<rect x="${x + 2}" y="${top}" width="44" height="${base - top}" fill="${CYAN}"/>`;
        }
        return `<rect x="${x + 2}" y="${top + 3}" width="46" height="${base - top - 3}" fill="none" stroke="${RED}" stroke-width="3"/>`;
    }).join('') + `<path d="M0 ${base + 2}H3168" stroke="${RED}" stroke-width="1"/>`;
}

let grid = '';
for (const y of [338, 622, 907]) {
    grid += `<path d="M0 ${y}H3168" stroke="#333335" stroke-width="1" stroke-dasharray="2 2"/>`;
}

document.getElementById('kline').innerHTML = grid + drawCandles(y => y, 6)
    + line(ma250, '#66b5f0') + line(ma120, '#3648c8')
    + line(ma5, '#fff') + line(ma10, '#ffee58') + line(ma20, '#b80fb0')
    + '<path d="M95 1076L44 1100L95 1122" fill="none" stroke="#fff" stroke-width="3"/>'
    + '<path d="M110 1105H280" stroke="#fff" stroke-width="3" stroke-dasharray="14 10"/>';

document.getElementById('turnover').innerHTML = drawBars(turnover, 585) + line(turnMa1, YELLOW) + line(turnMa2, MAGENTA);
document.getElementById('amount').innerHTML = drawBars(amount, 1185) + line(amtMa1, YELLOW) + line(amtMa2, MAGENTA);

const sticks = macd.map((y, i) =>
    `<path d="M${center(i)} 432V${y}" stroke="${y < 432 ? RED : '#30b030'}" stroke-width="3"/>`
).join('');
document.getElementById('macd').innerHTML = line(dif, '#fff') + line(dea, YELLOW) + sticks;

document.getElementById('boll').innerHTML = drawCandles(y => 751 + (y - 53) * 0.3015, 8)
    + line(bollUp, YELLOW) + line(bollMid, '#fff') + line(bollLow, MAGENTA);

let ticks = '';
for (let i = 11; i <= 61; i++) {
    const major = i === 16 || i === 39;
    const faint = i < 13 || i === 61;
    ticks += `<path d="M${center(i)} 0V${major ? 45 : 26}" stroke="${faint ? '#555' : '#a0a0a0'}" stroke-width="${major ? 3 : 2}"/>`;
}
document.getElementById('ticks').innerHTML = ticks;
```
